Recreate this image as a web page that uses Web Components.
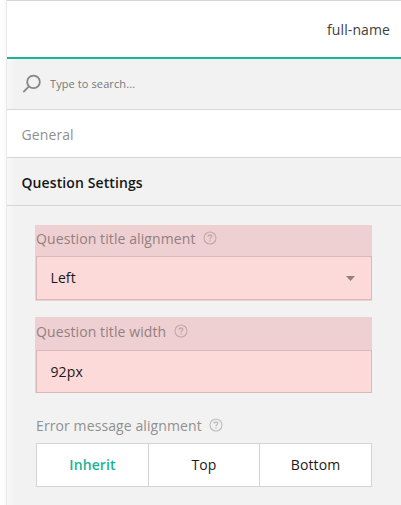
<!DOCTYPE html>
<html lang="en">
<head>
<meta charset="utf-8">
<title>Question settings</title>
<style>
body { margin: 0; width: 401px; height: 505px; overflow: hidden; background: #fff; font: 14px/20px "Open Sans", "Noto Sans", sans-serif; letter-spacing: .1px; color: #1a1a1a; }
</style>
</head>
<body>
<property-panel>
  <panel-header>full-name</panel-header>
  <search-bar>Type to search...</search-bar>
  <panel-section>General</panel-section>
  <panel-section active>Question Settings</panel-section>
  <settings-form>
    <form-field label="Question title alignment" marked style="--h:76px; --label:31px; --pad:1px"><text-box dropdown>Left</text-box></form-field>
    <form-field label="Question title width" marked style="--h:76px; --label:33px; --pad:0px; --shift:1px"><text-box>92px</text-box></form-field>
    <form-field label="Error message alignment" style="--h:76px; --label:33px; --pad:0px; --shift:2px"><button-group></button-group></form-field>
  </settings-form>
</property-panel>
<script>
function define(name, html, setup) {
  const template = document.createElement('template');
  template.innerHTML = html;
  customElements.define(name, class extends HTMLElement {
    connectedCallback() {
      if (this.shadowRoot) return;
      this.attachShadow({ mode: 'open' }).append(template.content.cloneNode(true));
      if (setup) setup(this, this.shadowRoot);
    }
  });
}

define('property-panel', `<style>
:host { display: flex; height: 505px; background: linear-gradient(90deg, #fff 0, #fafafa 6px); }
.edge { flex: 0 0 6px; }
.panel { flex: 1; box-sizing: border-box; border-left: 1px solid #e8e8e8; background: linear-gradient(90deg, #f8f8f8 0, #f2f2f2 8px); }
</style><div class="edge"></div><div class="panel"><slot></slot></div>`);

define('panel-header', `<style>
:host { display: flex; box-sizing: border-box; height: 59px; padding: 2px 11px 0 0; align-items: center; justify-content: flex-end; background: #fff; border-top: 1px solid #d6d6d6; border-bottom: 2px solid #1ab394; color: #404040; }
</style><slot></slot>`);

define('search-bar', `<style>
:host { display: flex; box-sizing: border-box; height: 51px; padding-left: 15px; align-items: center; border-bottom: 1px solid #d6d6d6; font-size: 11px; color: #777; }
svg { display: block; margin-right: 8px; }
</style><svg width="20" height="20" viewBox="0 0 20 20" fill="none" stroke="#858585" stroke-width="1.8"><circle cx="11.5" cy="7.9" r="6.3"/><path d="M7 12.4 1.3 18.1"/></svg><span><slot></slot></span>`);

define('panel-section', `<style>
:host { display: flex; box-sizing: border-box; height: 48px; padding: 2px 0 0 14.5px; align-items: center; background: #fff; border-bottom: 1px solid #d6d6d6; color: #909090; }
:host([active]) { background: none; color: #161616; font-weight: 600; }
</style><slot></slot>`);

define('settings-form', `<style>
:host { display: flex; flex-direction: column; gap: 16px; padding: 19px 29px 0 28px; }
::slotted(:last-child) { margin-top: 1px; }
</style><slot></slot>`);

define('help-icon', `<style>:host { display: block; } svg { display: block; }</style>
<svg width="14" height="14" viewBox="0 0 14 14" fill="none" stroke="currentColor" stroke-width="1.1"><circle cx="7" cy="7" r="6"/><path d="M5.1 5.8V5.3Q5.1 4 7 4T8.9 5.3Q8.9 6.1 7.9 6.7Q7 7.2 7 8.2" stroke-width="1.3"/><path d="M7 9.2V10.5" stroke-width="1.4"/></svg>`);

define('form-field', `<style>
:host { display: block; box-sizing: border-box; height: var(--h); padding: 0 0 var(--pad) 1px; }
:host([marked]) { background: #efd0d2; }
.label { display: flex; box-sizing: border-box; height: var(--label); padding-top: calc(4px + var(--shift, 0px)); color: #909090; align-items: flex-start; gap: 7.5px; }
:host([marked]) .label { color: #927f80; }
help-icon { margin-top: 2px; color: #bcbcbc; }
:host([marked]) help-icon { color: #c3a7a8; }
</style><div class="label"><span></span><help-icon></help-icon></div><slot></slot>`, (host, root) => {
  root.querySelector('span').textContent = host.getAttribute('label');
});

define('text-box', `<style>
:host { display: flex; box-sizing: border-box; height: calc(var(--h) - var(--label) - var(--pad)); padding: 0 16px 0 13.5px; align-items: center; justify-content: space-between; background: #fcdad9; border: 1px solid #d9b8b8; color: #1c1819; }
svg { display: none; }
:host([dropdown]) svg { display: block; }
</style><span><slot></slot></span><svg width="9" height="5" viewBox="0 0 9 5"><path d="M0 0H9L4.5 5Z" fill="#927f80"/></svg>`);

define('button-group', `<style>
:host { display: grid; grid-template-columns: 111px 110px 111px; gap: 1px; box-sizing: border-box; height: 44px; background: #d4d4d4; border: 1px solid #d4d4d4; }
div { display: flex; align-items: center; justify-content: center; background: #fff; color: #1a1a1a; }
.on { color: #1ab394; font-weight: 600; }
</style><div class="on">Inherit</div><div>Top</div><div>Bottom</div>`);
</script>
</body>
</html>
